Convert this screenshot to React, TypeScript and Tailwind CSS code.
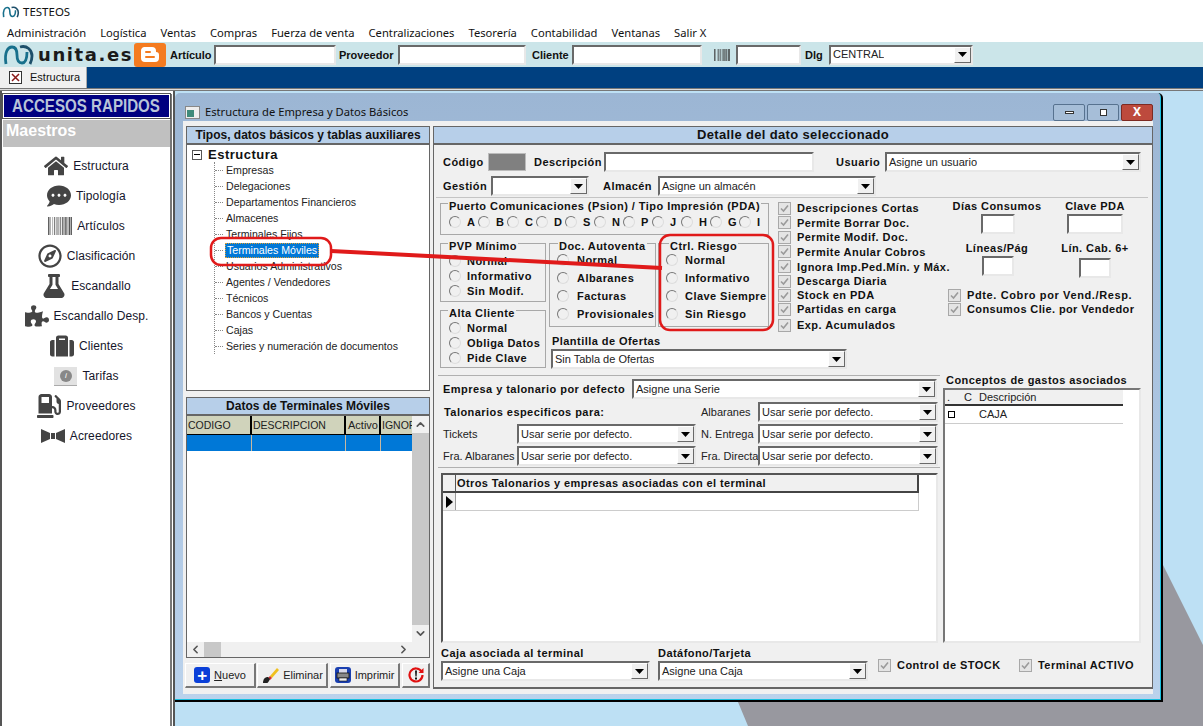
import React from "react";
import { FaHome, FaCommentDots, FaBarcode, FaRegCompass, FaFlask, FaPuzzlePiece, FaSuitcase, FaGasPump } from "react-icons/fa";
import { ChevronUp, ChevronDown, ChevronLeft, ChevronRight } from "lucide-react";

const Arrow = () => (
  <span className="flex h-full w-[17px] shrink-0 items-center justify-center border border-t-white border-l-white border-b-[#696969] border-r-[#696969] bg-[#f0f0f0]">
    <svg width="9" height="5" viewBox="0 0 9 5"><path d="M0 0h9L4.500 5z" fill="#000" /></svg>
  </span>
);

const Select = ({ text, className = "" }: { text: string; className?: string }) => (
  <div className={"flex h-[20px] shrink-0 items-center justify-between border-2 border-t-[#696969] border-l-[#696969] border-b-[#e8e8e8] border-r-[#e8e8e8] bg-white " + className}>
    <span className="truncate pl-[2px] text-[11px] leading-none text-[#222]">{text}</span>
    <Arrow />
  </div>
);

const Input = ({ className = "" }: { className?: string }) => (
  <div className={"h-[20px] shrink-0 border-2 border-t-[#696969] border-l-[#696969] border-b-[#e8e8e8] border-r-[#e8e8e8] bg-white " + className} />
);

const Radio = () => <span className="block h-[12px] w-[12px] shrink-0 rounded-full border border-t-[#777] border-l-[#777] border-b-[#ddd] border-r-[#ddd] bg-[#f0f0f0]" />;

const Check = () => (
  <span className="flex h-[13px] w-[13px] shrink-0 items-center justify-center border border-[#a8a8a8] bg-[#e4e4e4]">
    <svg width="9" height="9" viewBox="0 0 9 9"><path d="M1 4.500l2.500 2.500L8 1.500" fill="none" stroke="#9a9a9a" strokeWidth="1.600" /></svg>
  </span>
);

const B = ({ children, className = "" }: { children: React.ReactNode; className?: string }) => (
  <span className={"whitespace-nowrap text-[11px] font-bold leading-[14px] tracking-[0.45px] text-[#111] " + className}>{children}</span>
);

const Group = ({ legend, className = "", legendClass = "ml-[7px]", children }: { legend: string; className?: string; legendClass?: string; children: React.ReactNode }) => (
  <fieldset className={"shrink-0 border border-[#a8a8a8] " + className}>
    <legend className={"px-[1px] leading-[14px] " + legendClass}><B className="relative top-[3px] block">{legend}</B></legend>
    {children}
  </fieldset>
);

const RadioList = ({ items, cls }: { items: string[]; cls: string }) => (
  <div className={"flex flex-col " + cls}>
    {items.map((t) => (
      <div key={t} className="flex h-[15px] items-center"><Radio /><B className="ml-[6px]">{t}</B></div>
    ))}
  </div>
);

const Logo = ({ w, h }: { w: number; h: number }) => (
  <svg className="shrink-0" width={w} height={h} viewBox="0 0 32 22">
    <path d="M3 20C1 8 5 3 9 3c4 0 5 4 5 8 0 4 1 8 5 8 4 0 5-4 5-11" fill="none" stroke="#18708c" strokeWidth="2.800" />
    <path d="M17 3c7-2 12 3 12 9 0 4-1 6-2 8" fill="none" stroke="#1d4f6a" strokeWidth="2.800" />
  </svg>
);

const side: [string, React.ReactNode][] = [
  ["Estructura", <FaHome size={24} />],
  ["Tipología", <FaCommentDots size={24} />],
  ["Artículos", <FaBarcode size={24} />],
  ["Clasificación", <FaRegCompass size={24} />],
  ["Escandallo", <FaFlask size={24} />],
  ["Escandallo Desp.", <FaPuzzlePiece size={24} />],
  ["Clientes", <FaSuitcase size={24} />],
  [
    "Tarifas",
    <span className="flex h-[19px] w-[23px] items-center justify-center border-b border-[#aaa] bg-[#e2e2e2]">
      <span className="flex h-[12px] w-[12px] items-center justify-center rounded-full bg-[#888] text-[8px] italic leading-none text-white">i</span>
    </span>,
  ],
  ["Proveedores", <FaGasPump size={24} />],
  [
    "Acreedores",
    <svg width="24" height="14" viewBox="0 0 24 14"><path d="M0 0l9 4v6l-9 4zM24 0l-9 4v6l9 4zM10 4h4v6h-4z" fill="#444" /></svg>,
  ],
];

const tree = ["Empresas", "Delegaciones", "Departamentos Financieros", "Almacenes", "Terminales Fijos", "Terminales Móviles", "Usuarios Administrativos", "Agentes / Vendedores", "Técnicos", "Bancos y Cuentas", "Cajas", "Series y numeración de documentos"];

const Header = ({ children, className = "" }: { children: React.ReactNode; className?: string }) => (
  <div className={"flex h-[18px] shrink-0 items-center justify-center border-b-2 border-[#666] bg-[#b7cfe9] text-[12px] font-bold text-[#111] " + className}>{children}</div>
);

const ToolBtn = ({ w, icon, label }: { w: string; icon: React.ReactNode; label?: React.ReactNode }) => (
  <div className={"flex h-[25px] shrink-0 items-center justify-center gap-[4px] border border-t-white border-l-white border-b-2 border-r-2 border-b-[#777] border-r-[#777] bg-[#f0f0f0] text-[11px] text-[#222] " + w}>
    {icon}
    {label}
  </div>
);

const Checks = [
  ["Descripciones Cortas", "h-[14px]"],
  ["Permite Borrar Doc.", "h-[15px]"],
  ["Permite Modif. Doc.", "h-[14px]"],
  ["Permite Anular Cobros", "h-[15px]"],
  ["Ignora Imp.Ped.Mín. y Máx.", "h-[15px]"],
  ["Descarga Diaria", "h-[14px]"],
  ["Stock en PDA", "h-[14px]"],
  ["Partidas en carga", "h-[14px]"],
];

export default function App() {
  return (
    <div className="relative flex h-[726px] w-[1203px] flex-col overflow-hidden bg-white [font-family:'Liberation_Sans',Arial,sans-serif]">
      {/* title */}
      <div className="flex h-[22px] shrink-0 items-center pl-[2px] pt-[2px] [font-family:'Noto_Sans',sans-serif] text-[11.5px] text-[#111]">
        <Logo w={18} h={14} />
        <span className="ml-[3px]">TESTEOS</span>
      </div>
      {/* menu */}
      <div className="flex h-[20px] shrink-0 items-center gap-[14px] pl-[7px] pt-[1px] [font-family:'Noto_Sans',sans-serif] text-[11.2px] leading-none text-[#111]">
        {["Administración", "Logística", "Ventas", "Compras", "Fuerza de venta", "Centralizaciones", "Tesorería", "Contabilidad", "Ventanas", "Salir X"].map((m) => (
          <span key={m} className="whitespace-nowrap">{m}</span>
        ))}
      </div>
      {/* toolbar */}
      <div className="flex h-[25px] shrink-0 items-center bg-[#cbe5e9]">
        <span className="ml-[3px] flex"><Logo w={32} h={22} /></span>
        <span className="ml-[3px] w-[96px] shrink-0 [font-family:'DejaVu_Sans',sans-serif] text-[18px] font-bold leading-none tracking-[1.6px] text-[#1a1a1a]">unita.es</span>
        <span className="flex h-[24px] w-[32px] shrink-0 items-center justify-center rounded-[3px] bg-[#f47b20]">
          <svg width="20" height="15" viewBox="0 0 20 15"><path d="M4 0h8a4 4 0 014 4v1a3 3 0 013 3v3a4 4 0 01-4 4H5a4 4 0 01-4-4V4a4 4 0 013-4z" fill="#fff" /><path d="M6 5h4M6 10h8" stroke="#f47b20" strokeWidth="2" strokeLinecap="round" /></svg>
        </span>
        <B className="ml-[4px] w-[44px] !tracking-normal">Artículo</B>
        <Input className="w-[122px]" />
        <B className="ml-[3px] w-[59px] !tracking-normal">Proveedor</B>
        <Input className="w-[128px]" />
        <B className="ml-[6px] w-[40px] !tracking-normal">Cliente</B>
        <Input className="w-[130px]" />
        <FaBarcode className="ml-[12px] shrink-0 text-[#333]" size={16} />
        <Input className="ml-[6px] w-[65px]" />
        <B className="ml-[4px] w-[24px] !tracking-normal">Dlg</B>
        <Select text="CENTRAL" className="w-[144px]" />
      </div>
      {/* tabs */}
      <div className="flex h-[21px] shrink-0 bg-[#004080]">
        <div className="flex w-[87px] items-center border-r border-[#aaa] bg-[#f0f0f0] pl-[9px] text-[11px] text-[#111]">
          <svg width="13" height="13" viewBox="0 0 13 13"><rect x=".5" y=".5" width="12" height="12" fill="#fff" stroke="#333" /><path d="M3 3l7 7M10 3l-7 7" stroke="#8b1a1a" strokeWidth="1.500" /></svg>
          <span className="ml-[8px]">Estructura</span>
        </div>
      </div>
      <div className="h-[3px] shrink-0 border-y border-[#777] bg-[#ddd]" />
      {/* main */}
      <div className="flex min-h-0 flex-1">
        <aside className="flex w-[175px] shrink-0 flex-col border-x-2 border-[#555] bg-white pl-[1px] pr-px pt-[3px]">
          <div className="flex min-h-0 flex-1 flex-col border-r-2 border-[#777]">
            <div className="flex h-[24px] shrink-0 items-center justify-center overflow-hidden border border-white bg-[#000080] outline outline-1 outline-[#555]">
              <span className="scale-x-[0.84] whitespace-nowrap text-[18px] font-bold text-[#b9c4d8]">ACCESOS RAPIDOS</span>
            </div>
            <div className="mt-[2px] h-[27px] shrink-0 bg-[#c0c0c0] pl-[3px] pt-px text-[16px] font-bold leading-[20px] text-white">Maestros</div>
            <div className="flex flex-col pt-[4px]">
              {side.map(([label, icon]) => (
                <div key={label} className="flex h-[30px] items-center justify-center gap-[5px] text-[12px] tracking-[0.1px] text-[#15152a]">
                  <span className="flex items-center text-[#444]">{icon}</span>
                  <span>{label}</span>
                </div>
              ))}
            </div>
          </div>
        </aside>

        {/* desktop */}
        <div className="relative flex-1 bg-[#bde0f4]">
          <svg className="absolute inset-0" width="1028" height="635" viewBox="0 0 1028 635">
            <path d="M563 611L573 635H1028V554L988 474V611z" fill="#98989f" />
          </svg>
          {/* window */}
          <div className="absolute left-0 top-[2px] flex h-[609px] w-[988px] flex-col rounded-t-[5px] border-b-2 border-r-2 border-black bg-gradient-to-b from-[#9cb6d4] to-[#bad2ec] px-[8px] pb-[6px] shadow-[inset_-1px_-1px_0_#18c0e0]">
            <div className="flex h-[28px] shrink-0 items-center pt-[10px] [font-family:'Noto_Sans',sans-serif] text-[11.2px] text-[#111]">
              <svg className="ml-[2px]" width="15" height="13" viewBox="0 0 15 13"><rect x=".5" y=".5" width="14" height="12" fill="#eee" stroke="#888" /><rect x="2" y="4" width="7" height="7" fill="#3f8a7a" /></svg>
              <span className="ml-[5px] whitespace-nowrap">Estructura de Empresa y Datos Básicos</span>
              <div className="ml-auto flex gap-[2px]">
                <span className="flex h-[17px] w-[32px] items-center justify-center rounded-[2px] border border-[#57728f] bg-[#a6bed8]"><span className="h-[3px] w-[9px] border border-[#333] bg-white" /></span>
                <span className="flex h-[17px] w-[32px] items-center justify-center rounded-[2px] border border-[#57728f] bg-[#a6bed8]"><span className="h-[7px] w-[7px] border border-[#333] bg-white" /></span>
                <span className="flex h-[17px] w-[32px] items-center justify-center rounded-[2px] border border-[#7d2a22] bg-[#bd4a3d] text-[12px] font-bold leading-none text-white">X</span>
              </div>
            </div>
            <div className="flex min-h-0 flex-1 gap-[3px] bg-[#f0f0f0] pl-[3px] pt-[5px]">
              {/* left col */}
              <div className="flex w-[244px] shrink-0 flex-col">
                <div className="flex h-[265px] shrink-0 flex-col border border-[#666] bg-white">
                  <Header>Tipos, datos básicos y tablas auxiliares</Header>
                  <div className="pl-[5px] pt-[2px]">
                    <div className="flex h-[15px] items-center">
                      <span className="flex h-[10px] w-[10px] items-center justify-center border border-[#555]"><span className="h-px w-[6px] bg-black" /></span>
                      <span className="ml-[6px] text-[13px] font-bold leading-none tracking-[0.5px] text-[#111]">Estructura</span>
                    </div>
                    <div className="ml-[22px] flex flex-col border-l border-dotted border-[#888]">
                      {tree.map((t) => (
                        <div key={t} className="flex h-[16px] items-center text-[10.6px]">
                          <span className="h-px w-[8px] shrink-0 border-t border-dotted border-[#888]" />
                          {t === "Terminales Móviles" ? (
                            <span className="ml-[2px] whitespace-nowrap border border-dotted border-[#e0a030] bg-[#0078d7] px-[1px] leading-[13px] text-white">{t}</span>
                          ) : (
                            <span className="ml-[3px] whitespace-nowrap leading-none text-[#222]">{t}</span>
                          )}
                        </div>
                      ))}
                    </div>
                  </div>
                </div>
                <div className="mt-[6px] flex h-[261px] shrink-0 flex-col border border-[#666] bg-white">
                  <Header>Datos de Terminales Móviles</Header>
                  <div className="flex min-h-0 flex-1">
                    <div className="flex min-w-0 flex-1 flex-col">
                      <div className="flex h-[18px] shrink-0 bg-[#d0d3bb] text-[10.5px] leading-[18px] text-[#222]">
                        <span className="w-[65px] border-r-2 border-black pl-[1px]">CODIGO</span>
                        <span className="w-[94px] border-r-2 border-black pl-[1px]">DESCRIPCION</span>
                        <span className="w-[35px] border-r-2 border-black pl-[2px] text-[11px]">Activo</span>
                        <span className="flex-1 overflow-hidden whitespace-nowrap pl-[1px]">IGNORA</span>
                      </div>
                      <div className="flex h-[17px] shrink-0 border-t border-black bg-[#0078d7]">
                        <span className="w-[65px] border-r border-[#c8b8a0]" />
                        <span className="w-[94px] border-r border-[#c8b8a0]" />
                        <span className="w-[35px] border-r border-[#c8b8a0]" />
                      </div>
                      <div className="flex-1" />
                    </div>
                    <div className="flex w-[17px] shrink-0 flex-col items-center bg-[#c8c8c8]">
                      <div className="flex h-[17px] w-full items-center justify-center bg-[#f0f0f0]"><ChevronUp size={13} strokeWidth={3} className="text-[#555]" /></div>
                      <div className="flex-1" />
                      <div className="flex h-[17px] w-full items-center justify-center bg-[#f0f0f0]"><ChevronDown size={13} strokeWidth={3} className="text-[#555]" /></div>
                    </div>
                  </div>
                  <div className="flex h-[15px] shrink-0 items-center bg-[#f0f0f0]">
                    <span className="flex w-[17px] justify-center"><ChevronLeft size={13} strokeWidth={3} className="text-[#555]" /></span>
                    <span className="h-full w-[17px] bg-[#c8c8c8]" />
                    <span className="ml-auto mr-[17px] flex w-[17px] justify-center"><ChevronRight size={13} strokeWidth={3} className="text-[#555]" /></span>
                  </div>
                </div>
                <div className="-ml-px mt-[5px] flex">
                  <ToolBtn w="w-[71px]" icon={<span className="flex h-[16px] w-[16px] items-center justify-center rounded-[3px] bg-[#0a3fd8] text-[17px] font-bold leading-none text-white">+</span>} label={<span><u>N</u>uevo</span>} />
                  <ToolBtn w="w-[71px] ml-[1px]" icon={<svg width="18" height="17" viewBox="0 0 18 17"><path d="M9 9l7-8 2 2-7 8z" fill="#f0c020" /><path d="M9 9l2 2-2 2-2-2z" fill="#d83030" /><path d="M2 16c0-4 2-6 5-6l2 2c-1 2-2 4-3 4z" fill="#222" /></svg>} label="Eliminar" />
                  <ToolBtn w="w-[70px] ml-[2px]" icon={<svg width="16" height="16" viewBox="0 0 16 16"><rect width="16" height="16" rx="3" fill="#1a3fb0" /><rect x="4" y="2" width="8" height="4" fill="#d8d8e8" /><rect x="2" y="6" width="12" height="5" fill="#888" stroke="#111" strokeWidth=".8" /><rect x="4" y="11" width="8" height="3" fill="#eee" stroke="#111" strokeWidth=".6" /></svg>} label="Imprimir" />
                  <ToolBtn w="w-[28px] ml-[2px]" icon={<svg width="16" height="16" viewBox="0 0 16 16"><path d="M13.500 4.500A6.500 6.500 0 1 0 14.500 8" fill="none" stroke="#e01010" strokeWidth="2.200" /><path d="M15.500 1v5h-5z" fill="#e01010" /><path d="M7 3.500h2L8.600 9.500H7.400z" fill="#111" /><rect x="7" y="10.500" width="2" height="2" fill="#111" /></svg>} />
                </div>
              </div>

              {/* right col */}
              <div className="flex h-[563px] w-[720px] shrink-0 flex-col border border-b-2 border-[#666]">
                <Header className="text-[13px] tracking-[0.35px]">Detalle del dato seleccionado</Header>
                {/* row 1 */}
                <div className="mt-[7px] flex h-[20px] shrink-0 items-center pl-[9px]">
                  <B className="w-[45px]">Código</B>
                  <span className="h-[18px] w-[38px] border border-[#bbb] bg-[#808080]" />
                  <B className="ml-[8px] w-[70px]">Descripción</B>
                  <Input className="w-[210px]" />
                  <B className="ml-[22px] w-[49px]">Usuario</B>
                  <Select text="Asigne un usuario" className="w-[256px]" />
                </div>
                {/* row 2 */}
                <div className="mt-[4px] flex h-[20px] shrink-0 items-center pl-[9px]">
                  <B className="w-[48px]">Gestión</B>
                  <Select text="" className="w-[98px]" />
                  <B className="ml-[14px] w-[55px]">Almacén</B>
                  <Select text="Asigne un almacén" className="w-[218px]" />
                </div>
                <div className="ml-[2px] mr-[4px] mt-[1px] h-px shrink-0 bg-[#c4c4c4]" />

                {/* middle */}
                <div className="-mt-[2px] flex h-[179px] shrink-0">
                  <div className="ml-[6px] flex w-[334px] shrink-0 flex-col">
                    <Group legend="Puerto Comunicaciones (Psion) / Tipo Impresión (PDA)" legendClass="ml-[7px]" className="h-[39px] w-[329px]">
                      <div className="mt-[4px] flex items-center pl-[8px]">
                        {["A", "B", "C", "D", "S", "N", "P", "J", "H", "G", "I"].map((l) => (
                          <span key={l} className="flex h-[15px] w-[29px] items-center gap-[6px]"><Radio /><B>{l}</B></span>
                        ))}
                      </div>
                    </Group>
                    <div className="mt-px flex gap-[3px]">
                      <div className="flex w-[106px] shrink-0 flex-col gap-px">
                        <Group legend="PVP Mínimo" className="h-[66px]"><RadioList items={["Normal", "Informativo", "Sin Modif."]} cls="mt-[3px] pl-[8px]" /></Group>
                        <Group legend="Alta Cliente" className="h-[65px]"><RadioList items={["Normal", "Obliga Datos", "Pide Clave"]} cls="mt-[3px] pl-[8px]" /></Group>
                      </div>
                      <div className="flex flex-col">
                        <div className="flex gap-[2px]">
                          <Group legend="Doc. Autoventa" legendClass="ml-[8px]" className="h-[91px] w-[107px]"><RadioList items={["Normal", "Albaranes", "Facturas", "Provisionales"]} cls="mt-[2px] gap-[3px] pl-[7px] [&_span+span]:ml-[8px]" /></Group>
                          <Group legend="Ctrl. Riesgo" legendClass="ml-[10px]" className="h-[91px] w-[111px]"><RadioList items={["Normal", "Informativo", "Clave Siempre", "Sin Riesgo"]} cls="mt-[2px] gap-[3px] pl-[7px] [&_span+span]:ml-[7px]" /></Group>
                        </div>
                        <B className="ml-[3px] mt-[7px]">Plantilla de Ofertas</B>
                        <Select text="Sin Tabla de Ofertas" className="ml-[2px] mt-[1px] w-[296px]" />
                      </div>
                    </div>
                  </div>
                  <div className="ml-[4px] flex w-[170px] shrink-0 flex-col pt-[5px]">
                    {Checks.map(([t, h]) => (
                      <div key={t} className={"flex items-center gap-[6px] " + h}><Check /><B>{t}</B></div>
                    ))}
                    <div className="mt-[2px] flex h-[14px] items-center gap-[6px]"><Check /><B>Exp. Acumulados</B></div>
                  </div>
                  <div className="flex flex-1 flex-col pt-[3px]">
                    <div className="grid grid-cols-[98px_98px] justify-start">
                      <div className="flex flex-col items-center"><B>Días Consumos</B><Input className="ml-[2px] mt-[1px] w-[34px]" /></div>
                      <div className="flex flex-col items-center"><B>Clave PDA</B><Input className="mt-[1px] w-[56px]" /></div>
                      <div className="mt-[7px] flex flex-col items-center"><B>Líneas/Pág</B><Input className="ml-[2px] mt-[1px] w-[32px]" /></div>
                      <div className="mt-[7px] flex flex-col items-center"><B>Lín. Cab. 6+</B><Input className="mt-[3px] w-[32px]" /></div>
                    </div>
                    <div className="mt-[10px] flex h-[14px] items-center gap-[6px]"><Check /><B className="!tracking-[0.62px]">Pdte. Cobro por Vend./Resp.</B></div>
                    <div className="flex h-[14px] items-center gap-[6px]"><Check /><B className="!tracking-[0.38px]">Consumos Clie. por Vendedor</B></div>
                  </div>
                </div>

                {/* lower */}
                <div className="flex min-h-0 flex-1">
                  <div className="flex w-[508px] shrink-0 flex-col">
                    <div className="ml-[4px] mr-[2px] h-px shrink-0 bg-[#b0b0b0]" />
                    <div className="mt-[3px] flex items-center pl-[9px]">
                      <B className="w-[189px]">Empresa y talonario por defecto</B>
                      <Select text="Asigne una Serie" className="w-[305px]" />
                    </div>
                    <div className="mt-[3px] flex items-center pl-[10px]">
                      <B className="w-[257px]">Talonarios especificos para:</B>
                      <span className="w-[57px] text-[11px] text-[#222]">Albaranes</span>
                      <Select text="Usar serie por defecto." className="w-[180px]" />
                    </div>
                    <div className="mt-[2px] flex items-center pl-[9px]">
                      <span className="w-[74px] text-[11px] text-[#222]">Tickets</span>
                      <Select text="Usar serie por defecto." className="w-[179px]" />
                      <span className="ml-[5px] w-[57px] whitespace-nowrap text-[11px] text-[#222]">N. Entrega</span>
                      <Select text="Usar serie por defecto." className="w-[180px]" />
                    </div>
                    <div className="mt-[2px] flex items-center pl-[9px]">
                      <span className="w-[74px] whitespace-nowrap text-[11px] text-[#222]">Fra. Albaranes</span>
                      <Select text="Usar serie por defecto." className="w-[179px]" />
                      <span className="ml-[5px] w-[57px] whitespace-nowrap text-[11px] text-[#222]">Fra. Directa</span>
                      <Select text="Usar serie por defecto." className="w-[180px]" />
                    </div>
                    <div className="ml-[4px] mt-[1px] h-px w-[502px] shrink-0 bg-[#b0b0b0]" />
                    <div className="ml-[7px] mt-[5px] flex h-[170px] w-[497px] shrink-0 flex-col border-2 border-t-[#555] border-l-[#555] border-b-[#e8e8e8] border-r-[#e8e8e8] bg-white">
                      <div className="flex h-[18px] w-[476px] shrink-0 border-b-2 border-r-2 border-[#444] bg-[#f0f0f0]">
                        <span className="w-[13px] border-r border-[#555]" />
                        <span className="pl-[1px] text-[11px] font-bold leading-[17px] tracking-[0.4px] text-[#111]">Otros Talonarios y empresas asociadas con el terminal</span>
                      </div>
                      <div className="flex h-[18px] w-[476px] shrink-0 border-b border-r border-[#ccc]">
                        <span className="flex w-[13px] items-center justify-center border-r border-[#999] bg-[#f0f0f0]">
                          <svg width="7" height="12" viewBox="0 0 7 12"><path d="M0 0l7 6-7 6z" fill="#000" /></svg>
                        </span>
                      </div>
                    </div>
                  </div>
                  <div className="ml-[1px] flex min-w-0 flex-1 flex-col">
                    <B className="ml-[3px] mt-[-2px]">Conceptos de gastos asociados</B>
                    <div className="mt-px flex h-[255px] w-[198px] flex-col border-2 border-t-[#777] border-l-[#777] border-b-[#e8e8e8] border-r-[#e8e8e8] bg-white">
                      <div className="flex h-[16px] w-[178px] shrink-0 items-center border-b-2 border-[#333] bg-[#f0f0f0] text-[11px] text-[#222]">
                        <span className="w-[19px] pl-[2px]">.</span>
                        <span className="w-[15px]">C</span>
                        <span>Descripción</span>
                      </div>
                      <div className="flex h-[18px] w-[178px] shrink-0 items-center border-b border-[#ccc] text-[11px] text-[#222]">
                        <span className="ml-[3px] h-[7px] w-[7px] border border-black" />
                        <span className="ml-[24px]">CAJA</span>
                      </div>
                    </div>
                  </div>
                </div>

                {/* footer */}
                <div className="flex h-[43px] shrink-0 items-start pl-[7px] pt-[2px]">
                  <div className="flex w-[217px] shrink-0 flex-col"><B>Caja asociada al terminal</B><Select text="Asigne una Caja" className="mt-px w-[209px]" /></div>
                  <div className="flex w-[220px] shrink-0 flex-col"><B>Datáfono/Tarjeta</B><Select text="Asigne una Caja" className="mt-px w-[210px]" /></div>
                  <div className="mt-[12px] flex h-[14px] w-[141px] shrink-0 items-center gap-[6px]"><Check /><B>Control de STOCK</B></div>
                  <div className="mt-[12px] flex h-[14px] items-center gap-[6px]"><Check /><B>Terminal ACTIVO</B></div>
                </div>
              </div>
            </div>
          </div>
        </div>
      </div>

      {/* red annotation */}
      <svg className="pointer-events-none absolute left-0 top-0" width="1203" height="726" viewBox="0 0 1203 726">
        <rect x="211" y="238" width="120" height="27" rx="10" fill="none" stroke="#e01a1a" strokeWidth="2.500" />
        <path d="M331 251L662 268" stroke="#e01a1a" strokeWidth="4" />
        <rect x="660" y="235" width="113" height="95" rx="10" fill="none" stroke="#e01a1a" strokeWidth="2.500" />
      </svg>
    </div>
  );
}
